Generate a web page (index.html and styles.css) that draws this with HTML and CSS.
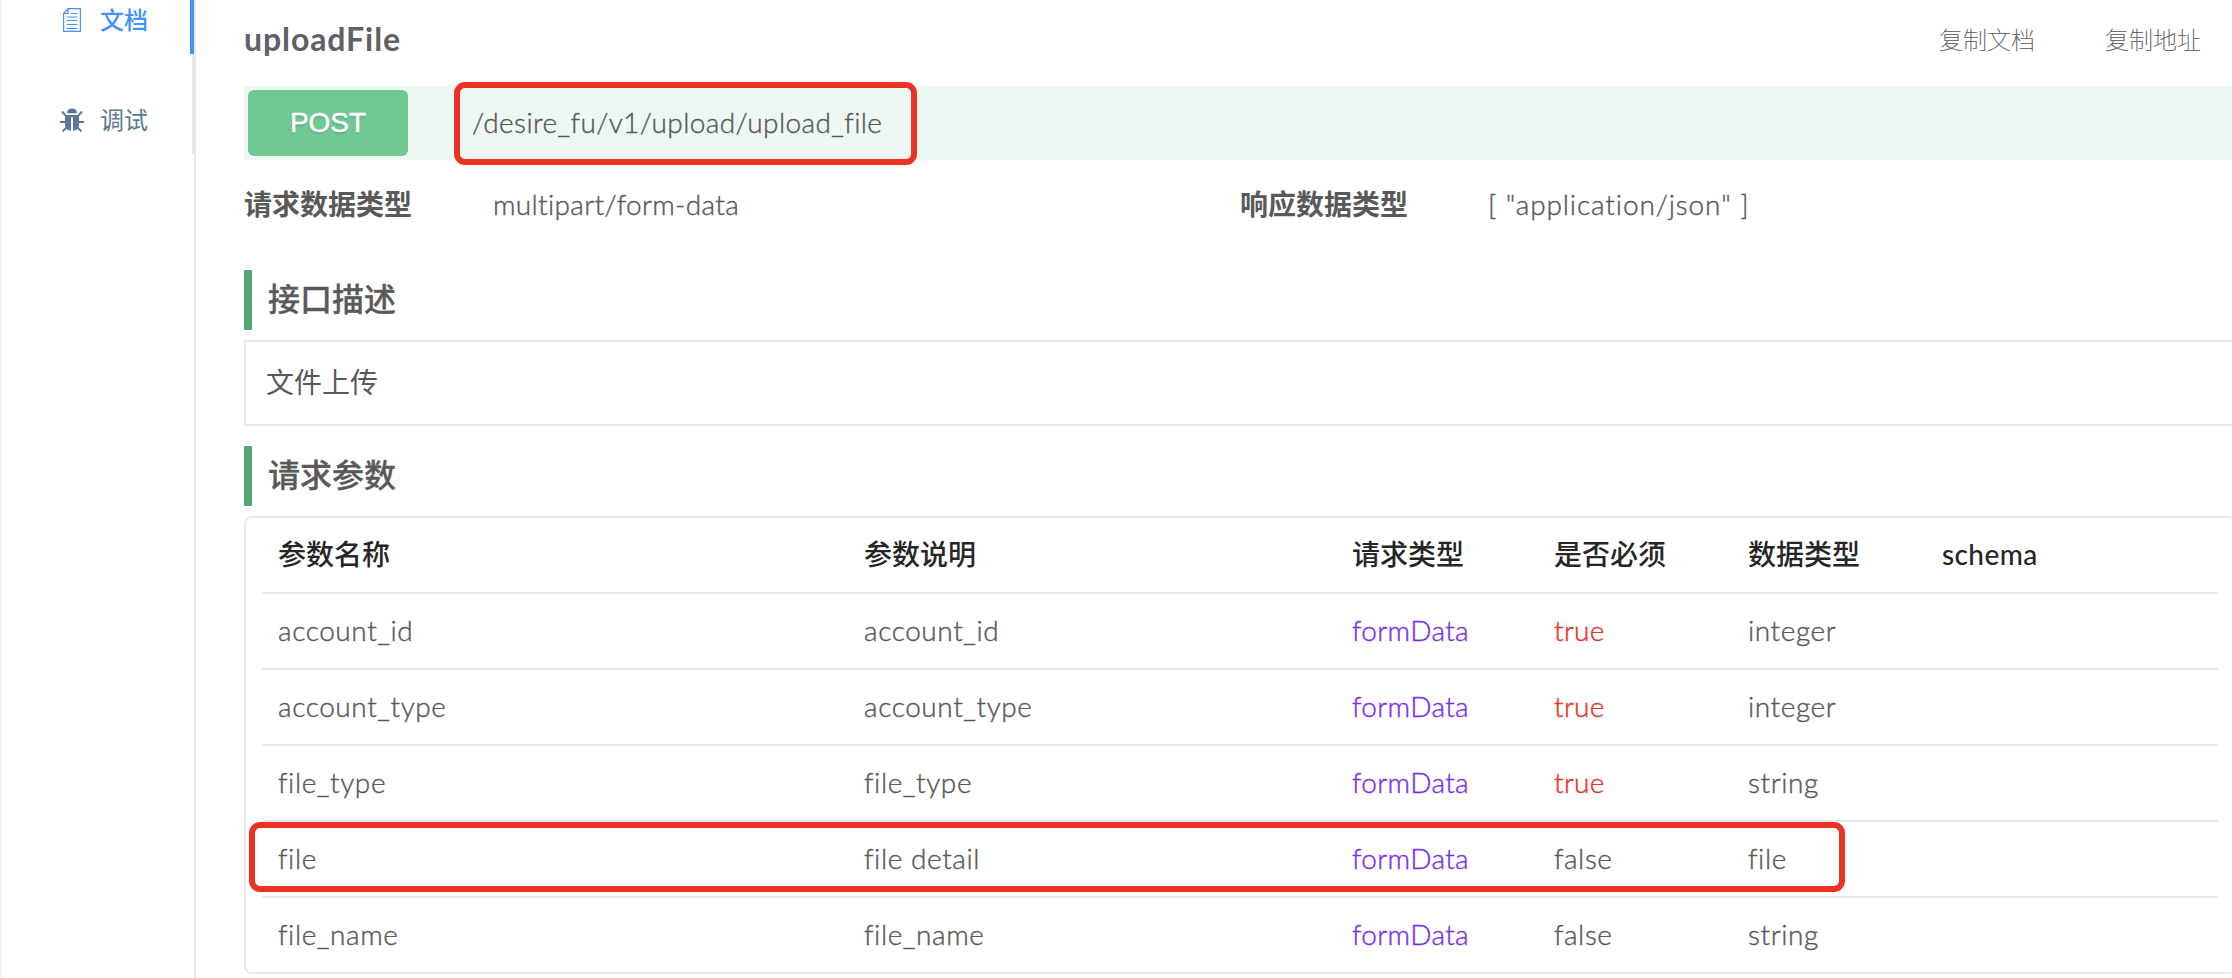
FILE: index.html
```
<!DOCTYPE html>
<html lang="zh-CN">
<head>
<meta charset="utf-8">
<title>uploadFile</title>
<link rel="stylesheet" href="styles.css">
</head>
<body>
<div class="page">
  <nav class="tabs">
    <a class="tab active">
      <svg class="icon" viewBox="0 0 24 24" fill="none" stroke="currentColor"><path d="M8 .6H20.400V23.400H3.600V5.500L8 .6V5.500H3.600" stroke-width="1.200"/><path d="M11 5.500H17.500M7 9H17.500M6.500 12.500H17.500M7 16.500H17.500M6.500 20.500H17.500" stroke-width="1"/></svg>
      <span>文档</span>
    </a>
    <a class="tab">
      <svg class="icon" viewBox="0 0 24 24"><path d="M7 5.300C7 2.500 9 .5 12 .5S17 2.500 17 5.300Z" fill="currentColor"/><path d="M5 7H19V17Q18.500 22.500 13 22.500V9.500H11V22.500Q5.500 22.500 5 17Z" fill="currentColor"/><path d="M2 3.500L6 8M22 3.500L18 8M0 14H6M24 14H18M2.500 23.500L7 19M21.500 23.500L17 19" fill="none" stroke="currentColor" stroke-width="1.900"/></svg>
      <span>调试</span>
    </a>
  </nav>
  <main class="doc">
    <header class="top">
      <h1>uploadFile</h1>
      <div class="actions"><span>复制文档</span><span>复制地址</span></div>
    </header>
    <div class="endpoint">
      <span class="method">POST</span>
      <span class="path marked"><span class="path-text">/desire_fu/v1/upload/upload_file</span></span>
    </div>
    <div class="types">
      <b>请求数据类型</b><span class="mime">multipart/form-data</span>
      <b>响应数据类型</b><span class="json">[ "application/json" ]</span>
    </div>
    <h2>接口描述</h2>
    <div class="desc">文件上传</div>
    <h2>请求参数</h2>
    <div class="params">
      <div class="row head"><span>参数名称</span><span>参数说明</span><span>请求类型</span><span>是否必须</span><span>数据类型</span><span class="schema">schema</span></div>
      <div class="row"><span>account_id</span><span>account_id</span><span class="in">formData</span><span class="yes">true</span><span>integer</span><span></span></div>
      <div class="row"><span>account_type</span><span>account_type</span><span class="in">formData</span><span class="yes">true</span><span>integer</span><span></span></div>
      <div class="row"><span>file_type</span><span>file_type</span><span class="in">formData</span><span class="yes">true</span><span>string</span><span></span></div>
      <div class="row marked"><span>file</span><span>file detail</span><span class="in">formData</span><span>false</span><span>file</span><span></span></div>
      <div class="row"><span>file_name</span><span>file_name</span><span class="in">formData</span><span>false</span><span>string</span><span></span></div>
    </div>
  </main>
</div>
</body>
</html>
```
FILE: styles.css
```
*, *::after { box-sizing: border-box; }
body {
  margin: 0;
  overflow: hidden;
  background: #fff;
  color: #595959;
  font: 28px/40px Lato, "Noto Sans CJK SC", sans-serif;
  font-variant-ligatures: none;
}
.page { display: flex; height: 978px; border-left: 2px solid #f0f0f7; }
.tabs { width: 194px; flex: none; border-right: 2px solid #e8e8e8; }
.tab {
  display: flex;
  align-items: center;
  gap: 16px;
  height: 100px;
  padding: 32px 0 0 58px;
  border-right: 2px solid #e8e8e8;
  color: #5c7896;
  font-size: 24px;
  line-height: 38px;
}
.tab.active { height: 54px; padding: 0 0 14px 58px; border-right: 4px solid #4491fa; color: #4491fa; font-weight: 500; }
.icon { width: 24px; height: 24px; flex: none; }
.doc { width: 1992px; flex: none; margin-left: 48px; }
.top { display: flex; justify-content: space-between; height: 86px; padding-top: 19px; }
h1 { margin: 0; font-size: 32px; line-height: 40px; font-weight: 700; letter-spacing: .9px; color: #606067; }
.actions { display: flex; gap: 70px; padding-right: 35px; font-size: 24px; font-weight: 100; line-height: 41px; -webkit-text-stroke: .2px; }
.endpoint { display: flex; height: 74px; padding: 4px; background: #eef8f3; }
.method {
  width: 160px;
  border-radius: 6px;
  background: #70c995;
  color: #fff;
  font: 400 28px/65px "Liberation Sans", sans-serif;
  text-align: center;
  text-shadow: 0 2px 2px rgba(0, 0, 0, .15);
  -webkit-text-stroke: .5px;
}
.marked { position: relative; }
.marked::after { content: ""; position: absolute; border: 6px solid #ec3223; border-radius: 11px; }
.path { margin-left: 64px; font-weight: 300; letter-spacing: .38px; line-height: 64px; -webkit-text-stroke: .4px; }
.path::after { left: -18px; top: -8px; width: 463px; height: 83px; }
.types { display: grid; grid-template-columns: 248px 748px 248px 1fr; height: 110px; padding-top: 24px; font-weight: 300; }
.types b { font-weight: 700; }
.mime { padding-left: 1px; letter-spacing: .33px; -webkit-text-stroke: .4px; }
.json { letter-spacing: .88px; -webkit-text-stroke: .4px; }
h2 {
  height: 60px;
  margin: 0;
  padding-left: 16px;
  border-left: 8px solid #4fa874;
  font-size: 32px;
  line-height: 58px;
  font-weight: 500;
  -webkit-text-stroke: .3px;
}
.desc { height: 86px; margin: 10px 0 20px; padding: 20px; border: 2px solid #e8e8e8; }
.params { height: 458px; margin-top: 10px; padding: 0 16px; border: 2px solid #e8e8e8; border-radius: 8px; }
.row {
  display: grid;
  grid-template-columns: 586px 488px 202px 194px 194px 1fr;
  height: 76px;
  padding-left: 16px;
  border-bottom: 2px solid #e8e8e8;
  font-weight: 300;
  letter-spacing: .58px;
  line-height: 72px;
  -webkit-text-stroke: .4px;
}
.row:last-child { border-bottom: 0; }
.head { color: #262626; font-weight: 500; letter-spacing: 0; -webkit-text-stroke: 0; }
.schema { letter-spacing: .4px; }
.in { color: #7c2df0; letter-spacing: .35px; }
.yes { color: #eb3223; letter-spacing: .3px; }
.row.marked::after { left: -13px; top: 0; width: 1596px; height: 70px; }
```
